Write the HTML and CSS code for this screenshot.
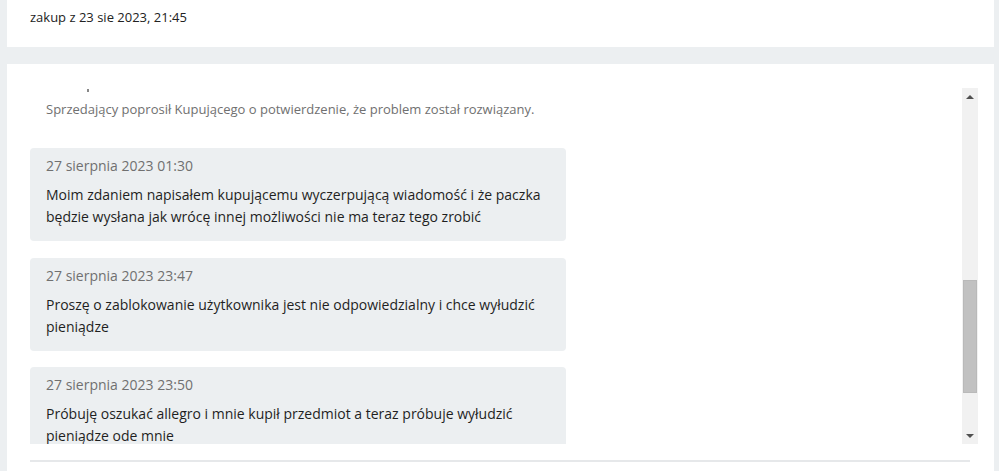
FILE: index.html
```html
<!DOCTYPE html>
<html lang="pl">
<head>
    <meta charset="UTF-8">
    <meta name="viewport" content="width=device-width, initial-scale=1.0">
    <title>Dyskusja</title>
    <link rel="stylesheet" href="styles.css">
</head>
<body>
    <!-- górna karta z datą zakupu -->
    <div class="card head">
        <span>zakup z 23 sie 2023, 21:45</span>
    </div>

    <!-- karta z wiadomościami -->
    <div class="card thread">
        <div class="box">
            <div class="view">
                <div class="list">
                    <div class="cut"></div>
                    <p class="info">Sprzedający poprosił Kupującego o potwierdzenie, że problem został rozwiązany.</p>

                    <div class="msg">
                        <div class="date">27 sierpnia 2023 01:30</div>
                        <div class="text">Moim zdaniem napisałem kupującemu wyczerpującą wiadomość i że paczka będzie wysłana jak wrócę innej możliwości nie ma teraz tego zrobić</div>
                    </div>
                    <div class="msg">
                        <div class="date">27 sierpnia 2023 23:47</div>
                        <div class="text">Proszę o zablokowanie użytkownika jest nie odpowiedzialny i chce wyłudzić pieniądze</div>
                    </div>
                    <div class="msg">
                        <div class="date">27 sierpnia 2023 23:50</div>
                        <div class="text">Próbuję oszukać allegro i mnie kupił przedmiot a teraz próbuje wyłudzić pieniądze ode mnie</div>
                    </div>
                </div>
            </div>
            <!-- pasek przewijania -->
            <div class="bar">
                <div class="arrow up"></div>
                <div class="track"><div class="thumb"></div></div>
                <div class="arrow down"></div>
            </div>
        </div>
        <div class="line"></div>
    </div>
</body>
</html>
```

FILE: styles.css
```css
* {
    margin: 0;
    padding: 0;
    box-sizing: border-box;
}

body {
    background-color: #eceff1;
    font-family: "Open Sans", "Liberation Sans", sans-serif;
    color: #222;
    height: 471px;
    overflow: hidden;
    padding: 0 5px 0 7px;
}

.card {
    background-color: #fff;
}

.head {
    height: 47px;
    padding: 7px 23px 0;
    font-size: 13px;
    line-height: 20px;
    margin-bottom: 17px;
}

.thread {
    height: 420px;
    padding: 24px 16px 0 23px;
}

.box {
    display: flex;
    height: 356px;
}

.view {
    flex: 1;
    overflow: hidden;
}

.list {
    width: 536px;
}

/* kropka z poprzedniej linii, ucięta przez przewinięcie */
.cut {
    height: 4px;
    margin-left: 57px;
    width: 2px;
    padding-top: 1px;
    background-clip: content-box;
    background-color: #888;
}

.info {
    padding: 6px 16px 0;
    font-size: 13px;
    line-height: 22px;
    color: #707070;
    white-space: nowrap;
    margin-bottom: 28px;
}

.msg {
    background-color: #eceff1;
    border-radius: 4px;
    padding: 7px 16px 13px;
    margin-bottom: 16.5px;
}

.date {
    font-size: 14px;
    line-height: 22px;
    color: #707070;
    margin-bottom: 7px;
}

.text {
    font-size: 14px;
    line-height: 22px;
    color: #1f1f1f;
}

.bar {
    width: 16px;
    background-color: #f1f1f1;
    display: flex;
    flex-direction: column;
}

.arrow {
    height: 17px;
    display: flex;
    align-items: center;
    justify-content: center;
}

.arrow::before {
    content: "";
    border-left: 4px solid transparent;
    border-right: 4px solid transparent;
}

.up::before {
    border-bottom: 4px solid #505050;
}

.down::before {
    border-top: 4px solid #505050;
}

.track {
    flex: 1;
    padding: 175px 1px 34px;
}

.thumb {
    height: 113px;
    background-color: #c1c1c1;
    border: 1px solid #b9b9b9;
}

.line {
    margin-top: 16px;
    width: 940px;
    height: 2px;
    background-color: #e6e8ea;
}
```
